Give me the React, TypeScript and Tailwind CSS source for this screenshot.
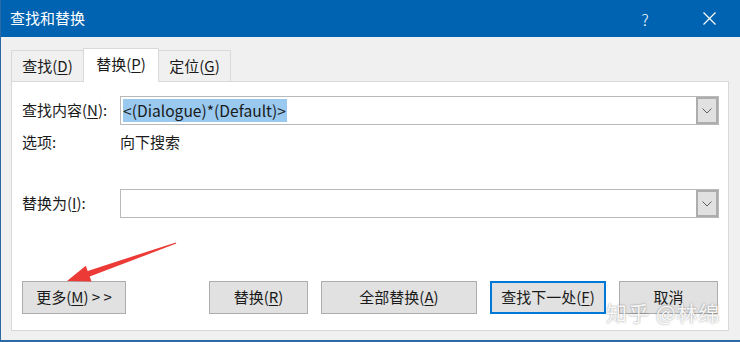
import React from 'react';

const font = { fontFamily: '"Noto Sans CJK SC", "Noto Sans", sans-serif' };

const Btn: React.FC<{ w: string; primary?: boolean; children: React.ReactNode }> = ({ w, primary, children }) => (
  <div
    className={`${w} h-[33px] flex items-center justify-center bg-[#e1e1e1] text-[15px] text-[#1a1a1a] ${
      primary ? 'border-2 border-[#0078d7]' : 'border border-[#adadad]'
    }`}
  >
    {children}
  </div>
);

const Combo: React.FC<{ children?: React.ReactNode }> = ({ children }) => (
  <div className="flex-1 h-[29px] flex border border-[#b9b9b9] bg-white">
    <div className="flex-1 flex items-center pl-[2px]">{children}</div>
    <div className="w-[22px] h-full bg-[#e1e1e1] border-2 border-[#adadad] flex items-center justify-center">
      <svg width="10" height="6" viewBox="0 0 10 6">
        <path d="M0.5 0.5 L5 5 L9.5 0.5" fill="none" stroke="#606060" strokeWidth="1" />
      </svg>
    </div>
  </div>
);

const App: React.FC = () => {
  return (
    <div className="relative w-[740px] h-[342px] overflow-hidden bg-[#f0f0f0] border-l border-b-2 border-[#2c6aa6]" style={font}>
      {/* title bar */}
      <div className="h-[37px] bg-[#0063b1] flex items-center text-white">
        <span className="pl-[9px] text-[15px]">查找和替换</span>
        <span className="ml-auto w-[20px] text-center text-[16px] font-light mr-[48px]">?</span>
        <svg className="mr-[24px]" width="13" height="13" viewBox="0 0 13 13">
          <path d="M0.5 0.5 L12.5 12.5 M12.5 0.5 L0.5 12.5" stroke="white" strokeWidth="1.2" />
        </svg>
      </div>

      <div className="pl-[10px] pr-[11px] pt-[11px]">
        {/* tabs */}
        <div className="flex items-end h-[33px] text-[15px] text-[#1a1a1a]">
          <div className="w-[72px] h-[31px] border-l border-t border-[#d9d9d9] bg-[#f0f0f0] flex items-center justify-center">
            查找(<span className="underline underline-offset-2">D</span>)
          </div>
          <div className="relative z-10 w-[76px] h-[34px] -mb-[1px] border-l border-t border-r border-[#d9d9d9] bg-white flex items-center justify-center pb-[3px]">
            替换(<span className="underline underline-offset-2">P</span>)
          </div>
          <div className="w-[72px] h-[31px] border-t border-r border-[#d9d9d9] bg-[#f0f0f0] flex items-center justify-center">
            定位(<span className="underline underline-offset-2">G</span>)
          </div>
        </div>

        {/* panel */}
        <div className="h-[250px] border border-[#d9d9d9] bg-white pl-[10px] pr-[9px] pt-[14px] text-[15px] text-[#1a1a1a]">
          <div className="flex items-center">
            <div className="w-[98px]">
              查找内容(<span className="underline underline-offset-2">N</span>):
            </div>
            <Combo>
              <span className="bg-[#99c9ef] text-[15.6px] leading-[23px] pr-[1px]">&lt;(Dialogue)*(Default)&gt;</span>
            </Combo>
          </div>

          <div className="flex items-center h-[22px] mt-[6px]">
            <div className="w-[98px]">选项:</div>
            <div>向下搜索</div>
          </div>

          <div className="flex items-center mt-[36px]">
            <div className="w-[98px]">
              替换为(<span className="underline underline-offset-2">I</span>):
            </div>
            <Combo />
          </div>

          <div className="flex mt-[63px] pr-[1px]">
            <Btn w="w-[104px]">
              更多(<span className="underline underline-offset-2">M</span>)&nbsp;&gt;&nbsp;&gt;
            </Btn>
            <div className="ml-auto flex gap-[13px]">
              <Btn w="w-[99px]">
                替换(<span className="underline underline-offset-2">R</span>)
              </Btn>
              <Btn w="w-[156px]">
                全部替换(<span className="underline underline-offset-2">A</span>)
              </Btn>
              <Btn w="w-[116px]" primary>
                查找下一处(<span className="underline underline-offset-2">F</span>)
              </Btn>
              <Btn w="w-[99px]">取消</Btn>
            </div>
          </div>
        </div>
      </div>

      {/* red arrow annotation */}
      <svg className="absolute left-0 top-0 pointer-events-none" width="740" height="342">
        <polygon
          points="66,281 90.5,281.5 88.7,276.5 175.3,243.6 174.8,242.4 86.7,270.9 84.8,265.8"
          fill="#ec3b36"
        />
      </svg>

      {/* watermark */}
      <div className="absolute left-[605px] top-[299px] text-[21px] leading-[26px] text-white/90 tracking-[1px] [text-shadow:0_0_2px_rgba(0,0,0,0.45)] pointer-events-none">
        知乎 @林绵
      </div>
    </div>
  );
};

export default App;
